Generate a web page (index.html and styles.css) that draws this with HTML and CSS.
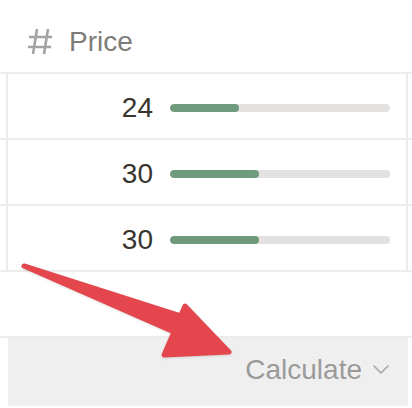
FILE: index.html
```html
<!DOCTYPE html>
<html lang="en">
<head>
    <meta charset="UTF-8">
    <meta name="viewport" content="width=device-width, initial-scale=1.0">
    <title>Price</title>
    <link rel="stylesheet" href="styles.css">
</head>
<body>

    <!-- Tabla con la columna de precios -->
    <div class="table">
        <div class="head">
            <svg class="hash" width="25" height="27" viewBox="0 0 25 27">
                <path d="M9 1 L5 26 M20 1 L16 26 M1 9 H24 M0 19 H23" stroke="#a3a3a3" stroke-width="2.6" fill="none"/>
            </svg>
            <span class="title">Price</span>
        </div>

        <div class="row">
            <div class="cell">
                <span class="num">24</span>
                <div class="bar"><div class="fill" style="width:31.4%"></div></div>
            </div>
        </div>
        <div class="row">
            <div class="cell">
                <span class="num">30</span>
                <div class="bar"><div class="fill" style="width:40.5%"></div></div>
            </div>
        </div>
        <div class="row">
            <div class="cell">
                <span class="num">30</span>
                <div class="bar"><div class="fill" style="width:40.5%"></div></div>
            </div>
        </div>
        <div class="row blank"></div>

        <!-- Pie de la tabla -->
        <div class="footer">
            <span class="calc">Calculate</span>
            <svg class="chevron" width="16" height="9" viewBox="0 0 16 9">
                <path d="M1 1 L8 8 L15 1" stroke="#a6a6a6" stroke-width="1.6" fill="none" stroke-linecap="round" stroke-linejoin="round"/>
            </svg>
        </div>

        <!-- Flecha roja encima -->
        <svg class="arrow" width="412" height="408" viewBox="0 0 412 408">
            <polygon points="24,266 180.7,316 185,306 229,352 164,355 174,332" fill="#e4464d" stroke="#e4464d" stroke-width="5" stroke-linejoin="round"/>
        </svg>
    </div>

</body>
</html>
```

FILE: styles.css
```css
/* Estilos generales */
body {
    margin: 0;
    background: #fff;
    font-family: "Liberation Sans", Arial, sans-serif;
}

.table {
    position: relative;
    width: 412px;
    height: 408px;
    overflow: hidden;
}

/* Cabecera */
.head {
    height: 74px;
    box-sizing: border-box;
    padding: 11px 0 0 28px;
    display: flex;
    align-items: center;
    gap: 16px;
    border-bottom: 2px solid #ececec;
}

.hash {
    display: block;
}

.title {
    font-size: 28px;
    line-height: 1;
    color: #7d7c79;
}

/* Filas */
.row {
    height: 64px;
    padding: 0 4px 0 6px;
    border-bottom: 2px solid #ececec;
}

.cell {
    height: 100%;
    box-sizing: border-box;
    padding-top: 4px;
    border-left: 2px solid #ececec;
    border-right: 2px solid #ececec;
    display: flex;
    align-items: center;
}

.blank {
    padding: 0;
}

.num {
    width: 145px;
    text-align: right;
    font-size: 28px;
    line-height: 1;
    color: #37352f;
}

.bar {
    margin-left: 17px;
    width: 220px;
    height: 8px;
    border-radius: 4px;
    background: #e3e2e0;
    overflow: hidden;
}

.fill {
    height: 100%;
    border-radius: 4px;
    background: #6f9a7c;
}

/* Pie */
.footer {
    height: 68px;
    margin: 0 4px 0 8px;
    box-sizing: border-box;
    padding: 0 19px 4px 0;
    background: #efefef;
    display: flex;
    justify-content: flex-end;
    align-items: center;
    gap: 11px;
}

.calc {
    font-size: 28px;
    line-height: 1;
    color: #9b9a98;
}

.chevron {
    display: block;
    margin-bottom: 2px;
}

/* Flecha */
.arrow {
    position: absolute;
    top: 0;
    left: 0;
    pointer-events: none;
    filter: drop-shadow(0 1px 1px rgba(0, 0, 0, 0.12));
}
```
